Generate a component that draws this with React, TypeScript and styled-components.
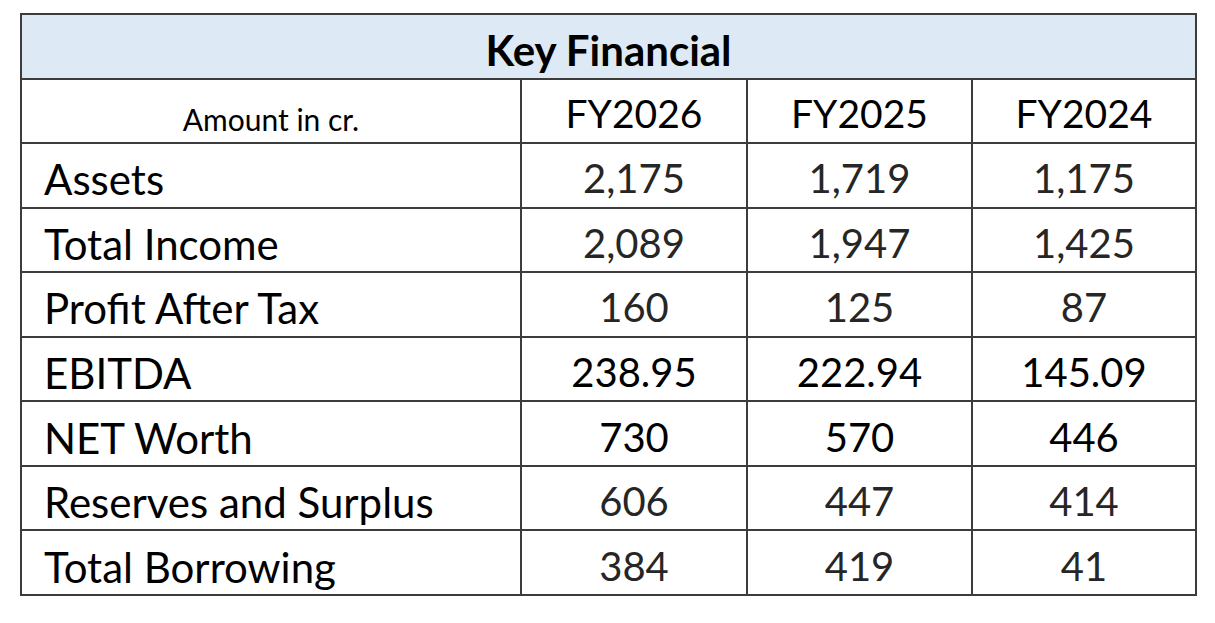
import styled, { createGlobalStyle } from "styled-components";

const GlobalStyle = createGlobalStyle`
    html, body {
        margin: 0;
        padding: 0;
        background: #ffffff;
    }
    body {
        font-family: "Lato", "Open Sans", sans-serif;
        color: #000;
    }
`;

type Row = {
    label: string;
    values: string[];
    strong?: boolean;
};

const years = ["FY2026", "FY2025", "FY2024"];

const rows: Row[] = [
    {label: "Assets", values: ["2,175", "1,719", "1,175"]},
    {label: "Total Income", values: ["2,089", "1,947", "1,425"]},
    {label: "Profit After Tax", values: ["160", "125", "87"]},
    {label: "EBITDA", values: ["238.95", "222.94", "145.09"], strong: true},
    {label: "NET Worth", values: ["730", "570", "446"], strong: true},
    {label: "Reserves and Surplus", values: ["606", "447", "414"]},
    {label: "Total Borrowing", values: ["384", "419", "41"]},
];

export default function App() {
    return <Page>
        <GlobalStyle/>
        <Grid>
            <Title>Key Financial</Title>
            <Unit>Amount in cr.</Unit>
            {years.map(y => <Year key={y}>{y}</Year>)}
            {rows.map(r => [
                <Label key={r.label}>{r.label}</Label>,
                ...r.values.map((v, i) => <Value key={r.label + i} $strong={r.strong}>{v}</Value>)
            ])}
        </Grid>
    </Page>
}

const Page = styled.div`
    padding: 13px 0 0 20px;
`;

const Grid = styled.div`
    width: 1177px;
    height: 583px;
    box-sizing: border-box;
    display: grid;
    grid-template-columns: 498px 224px 223px 222px;
    grid-template-rows: repeat(9, 1fr);
    gap: 2px;
    padding: 2px;
    background: #3c3c3c;
`;

const Cell = styled.div`
    background: #fff;
    display: flex;
    align-items: center;
    justify-content: center;
    line-height: 1;
    white-space: nowrap;
`;

const Title = styled(Cell)`
    grid-column: 1 / -1;
    background: #ddeaf6;
    font-size: 42px;
    font-weight: 700;
    padding-top: 8px;
`;

const Unit = styled(Cell)`
    font-size: 30px;
    align-items: flex-end;
    padding-bottom: 8px;
`;

const Year = styled(Cell)`
    font-size: 39px;
    align-items: flex-end;
    padding-bottom: 9px;
`;

const Label = styled(Cell)`
    font-size: 42px;
    justify-content: flex-start;
    padding-left: 22px;
    padding-top: 8px;
`;

const Value = styled(Cell)<{ $strong?: boolean }>`
    font-size: 40px;
    padding-top: 6px;
    color: ${props => props.$strong ? "#000" : "#262626"};
`;
